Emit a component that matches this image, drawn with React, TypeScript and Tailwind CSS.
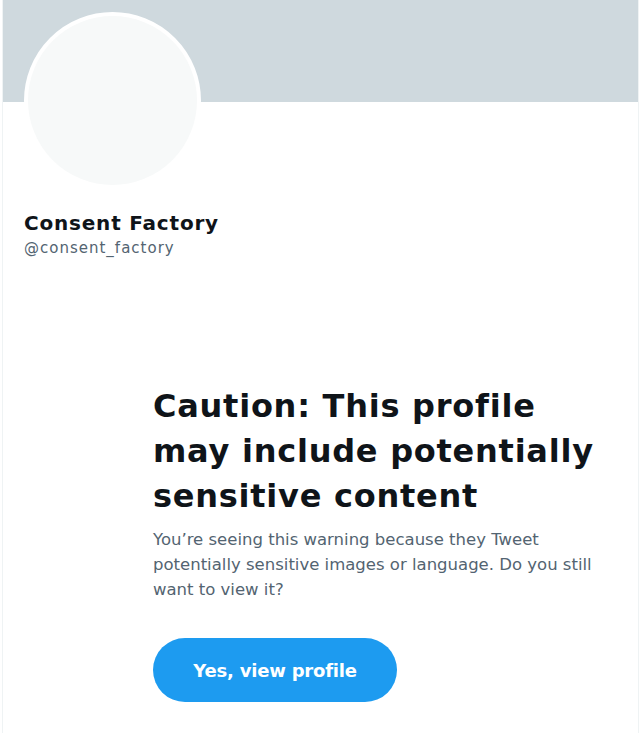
import React from 'react';

const font = { fontFamily: '"DejaVu Sans", "Liberation Sans", Arial, sans-serif' };

export default function App() {
  return (
    <div className="min-h-[733px] w-[639px] bg-white pl-[2px]" style={font}>
      <div className="min-h-[733px] border-x border-[#eff3f4]">
        <div className="h-[102px] bg-[#cfd9de]" />

        <div className="px-[21px]">
          <div className="mt-[-90px] h-[177px] w-[177px] rounded-full border-4 border-white bg-[#f7f9f9]" />
          <div className="mt-[22px]">
            <div className="text-[20px] font-bold leading-[24px] tracking-[0.8px] text-[#0f1419]">
              Consent Factory
            </div>
            <div className="mt-[3px] text-[15px] leading-[20px] tracking-[1px] text-[#536471]">
              @consent_factory
            </div>
          </div>
        </div>

        <div className="mt-[126px] pl-[150px]">
          <h1 className="text-[32px] font-bold leading-[45px] tracking-[0.75px] text-[#0f1419]">
            Caution: This profile
            <br />
            may include potentially
            <br />
            sensitive content
          </h1>
          <p className="mt-[8px] text-[16.5px] leading-[25px] text-[#536471]">
            You’re seeing this warning because they Tweet
            <br />
            potentially sensitive images or language. Do you still
            <br />
            want to view it?
          </p>
          <button className="mt-[36px] flex h-[64px] w-[244px] items-center justify-center rounded-full bg-[#1d9bf0] text-[18px] font-bold tracking-[-0.2px] text-white">
            Yes, view profile
          </button>
        </div>
      </div>
    </div>
  );
}
